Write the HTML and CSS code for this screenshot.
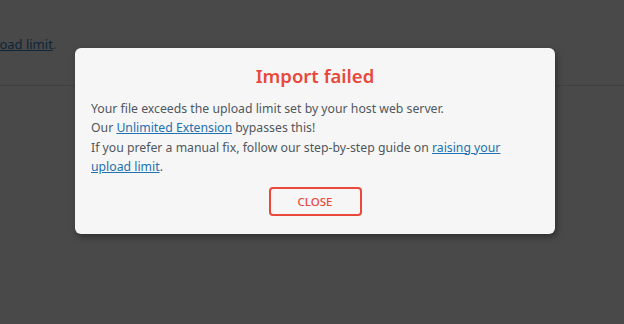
FILE: index.html
```html
<!DOCTYPE html>
<html>
<head>
<meta charset="utf-8">
<link rel="stylesheet" href="styles.css">
</head>
<body>
<div class="page">
  <p class="bg-text"><a href="#">upload limit</a>.</p>
  <div class="bg-rule"></div>
</div>
<div class="overlay">
  <div class="modal">
    <h2 class="title">Import failed</h2>
    <div class="body">
      <p>Your file exceeds the upload limit set by your host web server.</p>
      <p>Our <a href="#">Unlimited Extension</a> bypasses this!</p>
      <p>If you prefer a manual fix, follow our step-by-step guide on <a href="#">raising your upload limit</a>.</p>
    </div>
    <div class="actions">
      <button class="close-btn">CLOSE</button>
    </div>
  </div>
</div>
</body>
</html>
```
FILE: styles.css
```css
html, body {
  margin: 0;
  padding: 0;
  width: 624px;
  height: 324px;
  overflow: hidden;
  background: #494949;
  font-family: "Noto Sans", "Open Sans", sans-serif;
}
.page {
  padding-top: 34px;
}
.bg-text {
  margin: 0 0 0 -20px;
  font-size: 13px;
  line-height: 20px;
  color: #2b2e30;
}
.bg-text a {
  color: #0d2538;
  text-decoration: underline;
}
.bg-rule {
  margin-top: 31px;
  height: 1px;
  background: #404040;
}
.overlay {
  position: absolute;
  inset: 0;
  display: flex;
  justify-content: center;
  align-items: flex-start;
  padding-top: 48px;
  padding-left: 6px;
}
.modal {
  width: 448px;
  padding: 13px 16px 18px;
  background: #f6f6f6;
  border-radius: 6px;
  box-shadow: 2px 3px 6px rgba(0, 0, 0, 0.35);
}
.title {
  margin: 0;
  text-align: center;
  font-size: 18.5px;
  line-height: 30px;
  font-weight: 600;
  color: #e8493b;
}
.body {
  margin-top: 8px;
  font-size: 12.25px;
  line-height: 19.6px;
  color: #50575e;
}
.body p {
  margin: 0;
  line-height: 19.6px;
}
.body p + p {
  margin-top: -0.3px;
}
.body a {
  color: #2271b1;
  text-decoration: underline;
}
.actions {
  display: flex;
  justify-content: center;
  margin-top: 10px;
}
.close-btn {
  width: 93px;
  height: 29px;
  border: 2px solid #e8493b;
  border-radius: 4px;
  background: #f6f6f6;
  color: #e8493b;
  font-family: inherit;
  font-size: 11.5px;
  font-weight: 500;
  padding: 0;
}
```
